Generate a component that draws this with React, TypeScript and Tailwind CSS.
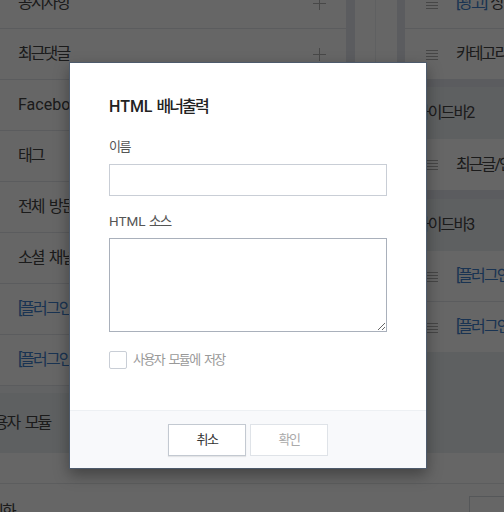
import React from "react"

const ko = "tracking-[-0.12em] [word-spacing:0.2em]"

function Plus() {
    return (
        <svg width="13" height="13" viewBox="0 0 13 13" className="shrink-0">
            <path d="M6.5 0v13M0 6.5h13" stroke="#b5b5b5" strokeWidth="1" />
        </svg>
    )
}

function Grip() {
    return (
        <svg width="12" height="11" viewBox="0 0 12 11" className="shrink-0">
            <path d="M0 1.5h12M0 4.5h12M0 7.5h12M0 10.5h12" stroke="#b0b0b0" strokeWidth="1" />
        </svg>
    )
}

function LeftRow({ children, blue }: { children: React.ReactNode; blue?: boolean }) {
    return (
        <div className="flex h-[51px] shrink-0 items-center justify-between border-b border-[#e3e6ea] bg-white pl-[18px] pr-[20px]">
            <span className={`whitespace-nowrap text-[16px] ${blue ? "text-[#3f7fcc]" : "text-[#444]"}`}>{children}</span>
            <Plus />
        </div>
    )
}

function RightRow({ children, border, h }: { children: React.ReactNode; border?: boolean; h: string }) {
    return (
        <div className={`flex shrink-0 items-center bg-white pl-[21px] ${h} ${border ? "border-b border-[#e3e6ea]" : ""}`}>
            <Grip />
            <span className="ml-[18px] whitespace-nowrap text-[16px] text-[#444]">{children}</span>
        </div>
    )
}

function SideHeader({ children }: { children: React.ReactNode }) {
    return (
        <div className="flex h-[52px] shrink-0 items-center bg-[#eceff3] pl-[10px] text-[16px] text-[#444]">
            <span className={ko}>{children}</span>
        </div>
    )
}

export default function App() {
    return (
        <div className="relative h-[512px] w-[504px] overflow-hidden bg-white font-['Roboto','Noto_Sans_CJK_KR',sans-serif]">
            {/* page behind the dialog */}
            <div className="-mt-[22px] flex h-[475px]">
                <div className="flex w-[346px] shrink-0 flex-col">
                    <LeftRow><span className={ko}>공지사항</span></LeftRow>
                    <LeftRow><span className={ko}>최근댓글</span></LeftRow>
                    <LeftRow>Facebook <span className={ko}>페이지</span></LeftRow>
                    <LeftRow><span className={ko}>태그</span></LeftRow>
                    <LeftRow><span className={ko}>전체 방문자</span></LeftRow>
                    <LeftRow><span className={ko}>소셜 채널</span></LeftRow>
                    <LeftRow blue><span className={ko}>[플러그인] 배너</span></LeftRow>
                    <LeftRow blue><span className={ko}>[플러그인] 광고</span></LeftRow>
                    <div className="h-[7px] shrink-0 bg-[#f6f7f9]" />
                    <div className="flex flex-1 items-center bg-[#eceff3]">
                        <span className={`-ml-[19px] whitespace-nowrap text-[16px] text-[#444] ${ko}`}>사용자 모듈</span>
                    </div>
                </div>
                <div className="w-[9px] shrink-0 bg-[#e3e7ed]" />
                <div className="flex w-[42px] shrink-0 bg-white">
                    <div className="w-[21px] border-r border-[#eef0f3]" />
                </div>
                <div className="w-[8px] shrink-0 bg-[#e3e7ed]" />
                <div className="flex w-[240px] shrink-0 flex-col bg-[#eceff3]">
                    <RightRow h="h-[51px]" border>
                        <span className={`text-[#3f7fcc] ${ko}`}>[광고]</span> <span className={ko}>상단</span>
                    </RightRow>
                    <RightRow h="h-[50px]"><span className={ko}>카테고리</span></RightRow>
                    <div className="h-[8px] shrink-0 bg-[#e3e7ed]" />
                    <SideHeader>사이드바2</SideHeader>
                    <RightRow h="h-[51px]"><span className={ko}>최근글/인기글</span></RightRow>
                    <div className="h-[9px] shrink-0 bg-[#e3e7ed]" />
                    <SideHeader>사이드바3</SideHeader>
                    <RightRow h="h-[51px]" border>
                        <span className={`text-[#3f7fcc] ${ko}`}>[플러그인]</span>
                    </RightRow>
                    <RightRow h="h-[50px]">
                        <span className={`text-[#3f7fcc] ${ko}`}>[플러그인]</span>
                    </RightRow>
                </div>
            </div>
            <div className="h-[31px] border-b border-[#e6e8eb] bg-white" />
            <div className="flex items-start bg-white">
                <span className={`-ml-[26px] mt-[16px] whitespace-nowrap text-[16px] text-[#444] ${ko}`}>
                    <span className="text-[#3f7fcc]">[</span>정리화
                </span>
                <div className="ml-auto -mr-[30px] mt-[12px] h-[32px] w-[65px] border border-[#d5d9df] bg-white" />
            </div>

            {/* dim */}
            <div className="absolute inset-0 bg-black/60" />

            {/* dialog */}
            <div className="absolute left-[69px] top-[62px] w-[358px] border border-[#4d5a6b] bg-white shadow-[0_6px_14px_rgba(0,0,0,0.35)]">
                <div className="px-[39px] pb-[40px] pt-[32px]">
                    <h2 className="text-[16px] font-medium leading-6 text-[#222]">
                        HTML <span className={ko}>배너출력</span>
                    </h2>
                    <label className={`mt-[18px] block text-[13px] leading-5 text-[#555] ${ko}`}>이름</label>
                    <input className="mt-[7px] block h-[32px] w-full border border-[#c9ced6] bg-white px-2 text-[13px] outline-none" />
                    <label className="mt-[15px] block text-[13.5px] leading-5 text-[#555]">
                        HTML <span className={ko}>소스</span>
                    </label>
                    <textarea className="mt-[7px] block h-[94px] w-full border border-[#a9b0bb] bg-white p-2 text-[13px] outline-none" />
                    <label className="mt-[18px] flex h-[20px] items-center gap-[6px]">
                        <span className="h-[18px] w-[18px] rounded-[2px] border border-[#c9ced6] bg-white" />
                        <span className={`text-[13px] leading-5 text-[#999] ${ko}`}>사용자 모듈에 저장</span>
                    </label>
                </div>
                <div className="flex justify-center gap-[4px] border-t border-[#edf0f3] bg-[#f8f9fb] pb-[12px] pt-[13px]">
                    <button className="h-[32px] w-[78px] border border-[#c3c9d1] bg-white text-[13px] text-[#333] shadow-[0_1px_1px_rgba(0,0,0,0.08)]">
                        <span className={ko}>취소</span>
                    </button>
                    <button className="h-[32px] w-[78px] border border-[#dfe3e8] bg-white text-[13px] text-[#aaa]">
                        <span className={ko}>확인</span>
                    </button>
                </div>
            </div>
        </div>
    )
}
